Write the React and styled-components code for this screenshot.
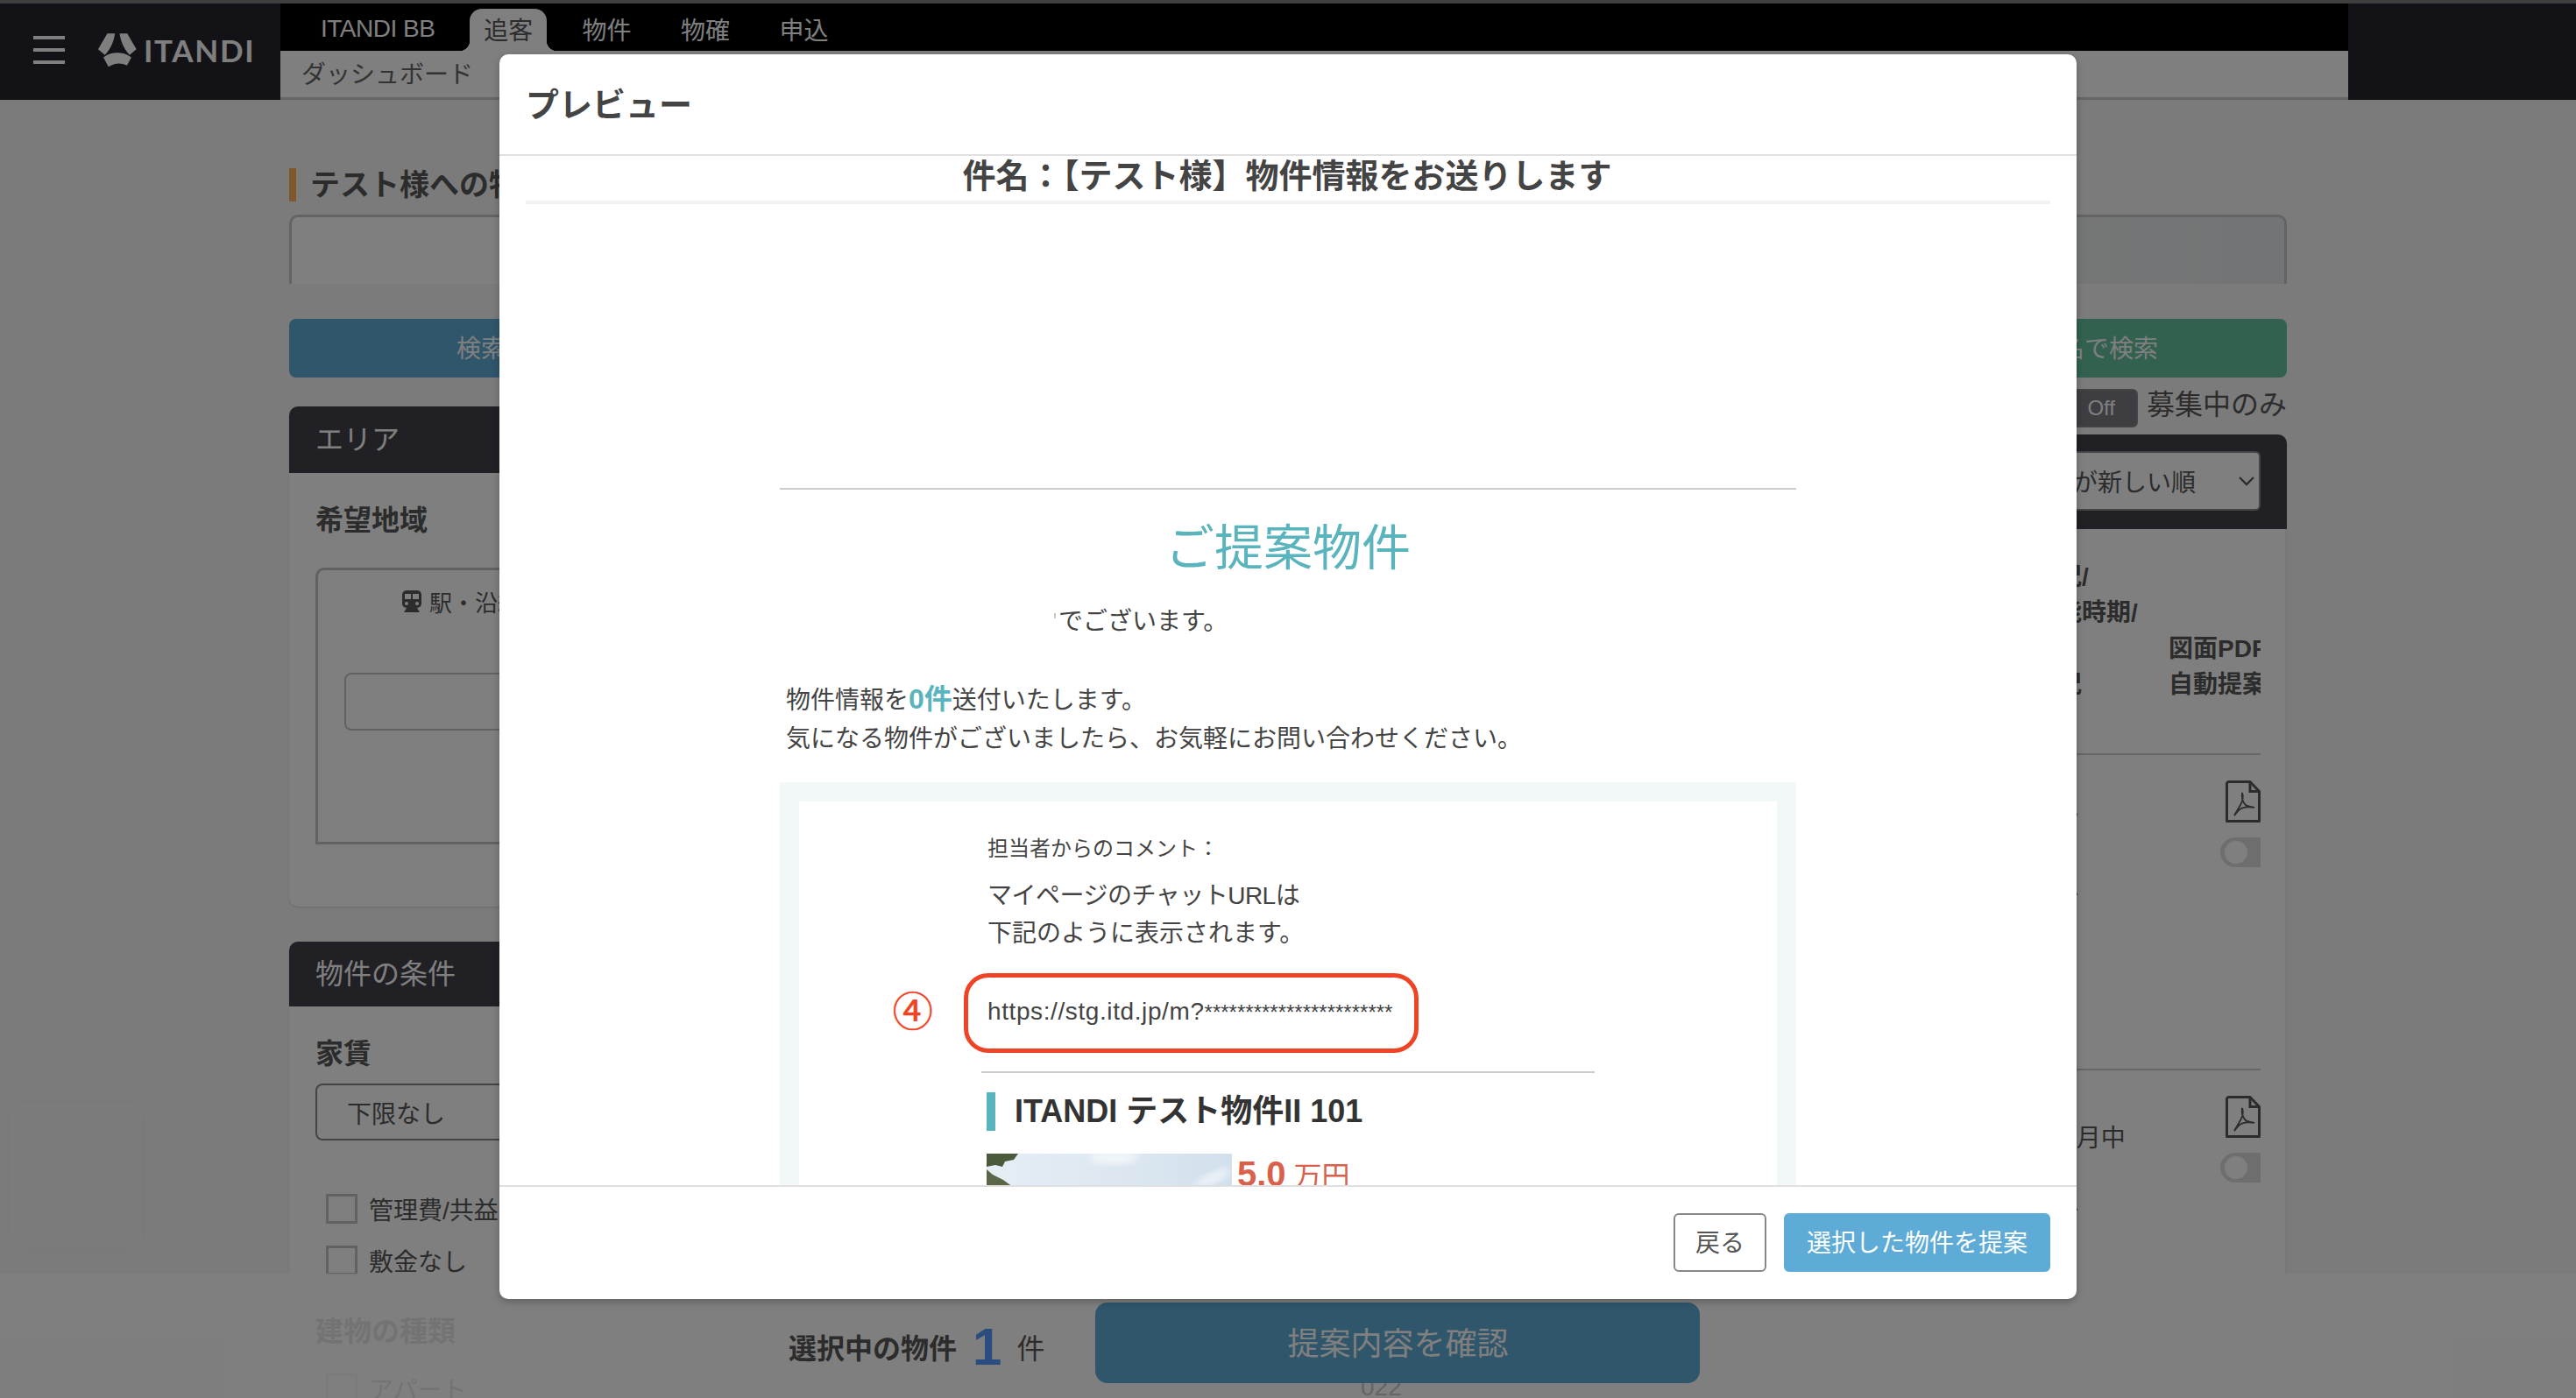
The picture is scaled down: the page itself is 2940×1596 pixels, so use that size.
import React from "react";
import styled, { createGlobalStyle } from "styled-components";

const GlobalStyle = createGlobalStyle`
  html, body { margin: 0; padding: 0; }
  body { font-family: "Liberation Sans", "Noto Sans CJK JP", sans-serif; color: #595959; }
  * { box-sizing: border-box; }
`;

const Screen = styled.div`
  position: relative; width: 2940px; height: 1596px; overflow: hidden; background: #f6f6f8;
`;
const TopStrip = styled.div` height: 4px; background: #7e7e7e; `;

/* header */
const Header = styled.header` display: flex; height: 110px; `;
const Brand = styled.div`
  width: 320px; background: #26262f; display: flex; align-items: center; padding: 0 0 4px 38px;
`;
const Burger = styled.div`
  width: 36px; height: 32px; display: flex; flex-direction: column; justify-content: space-between;
  margin-right: 38px;
  span { display: block; height: 4px; background: #fff; }
`;
const LogoText = styled.span`
  font-family: Lato, "Liberation Sans", sans-serif; font-weight: 700; font-size: 35px; line-height: 1;
  color: #fff; letter-spacing: 1.7px; margin-left: 8px;
`;
const NavColumn = styled.div` width: 2360px; display: flex; flex-direction: column; background: #fff; `;
const NavBlack = styled.nav` height: 54px; background: #000; display: flex; padding: 6px 0 0 18px; `;
const Tab = styled.div`
  position: relative; height: 48px; display: flex; align-items: center; justify-content: center;
  min-width: 112.5px; padding: 0 28px 3px; font-size: 28px; border-radius: 14px 14px 0 0; letter-spacing: ${p => (p.$latin ? "-0.5px" : "0")};
  color: ${p => (p.$active ? "#595959" : "#fff")};
  background: ${p => (p.$active ? "#fff" : "transparent")};
  ${p => p.$active && `
    width: 88px; min-width: 88px; padding: 0 0 3px; margin: 0 12px;
    &::before, &::after { content: ""; position: absolute; bottom: 0; width: 12px; height: 12px; }
    &::before { left: -12px; background: radial-gradient(circle at 0 0, #000 12px, #fff 12.5px); }
    &::after { right: -12px; background: radial-gradient(circle at 100% 0, #000 12px, #fff 12.5px); }
  `}
`;
const SubNav = styled.div`
  flex: 1; display: flex; align-items: center; padding: 0 0 4px 24px; font-size: 28px; color: #666;
  border-bottom: 3px solid #ccc;
`;
const BrandRight = styled.div` flex: 1; background: #26262f; `;

/* page */
const Page = styled.main` width: 2610px; padding: 78px 0 0 330px; `;
const SectionTitle = styled.h1`
  margin: 0; height: 38px; border-left: 8px solid #ffb05a; padding-left: 16px;
  font-size: 34px; line-height: 38px; font-weight: 700; color: #595959; white-space: nowrap;
`;
const SearchBox = styled.div`
  margin-top: 15px; height: 79px; border: 3px solid #c8c8c8; border-bottom: 0; border-radius: 10px 10px 0 0;
  background: linear-gradient(90deg, #fff 0%, #fff 40%, #e6e8ea 100%);
`;
const ButtonRow = styled.div` margin-top: 40px; display: flex; gap: 20px; `;
const SearchButton = styled.div`
  flex: 1; height: 67px; border-radius: 8px; display: flex; align-items: center; font-size: 28px; color: #fff;
  background: ${p => p.$bg};
  justify-content: ${p => (p.$end ? "flex-end" : "flex-start")};
  padding: ${p => (p.$end ? "0 147px 3px 0" : "0 0 3px 191px")};
`;
const Columns = styled.div` margin-top: 13px; display: flex; gap: 60px; align-items: flex-start; `;
const LeftColumn = styled.div` width: 760px; padding-top: 20px; `;
const RightColumn = styled.div` flex: 1; min-width: 0; `;

const Panel = styled.section`
  background: #fff; border-radius: 10px; margin-bottom: 40px; box-shadow: 0 1px 2px rgba(0,0,0,.15);
`;
const PanelHead = styled.h2`
  margin: 0; height: ${p => p.$h}px; padding: 0 0 6px 30px; background: #424048; color: #fff;
  border-radius: 10px 10px 0 0; font-size: 32px; font-weight: 400; display: flex; align-items: center;
`;
const PanelBody = styled.div` padding: 34px 30px ${p => p.$pb || 0}px; `;
const FieldLabel = styled.h3`
  margin: 0; font-size: 32px; line-height: 40px; font-weight: 700; color: #595959;
  ${p => p.$mt && `margin-top: ${p.$mt}px;`}
`;
const AreaBox = styled.div`
  margin-top: 34px; height: 316px; border: 3px solid #c4c4c4; border-radius: 10px 0 0 0; padding: 18px 30px 0;
`;
const AreaTab = styled.div`
  display: flex; align-items: center; gap: 9px; padding-left: 66px; height: 34px;
  font-size: 26px; color: #595959; white-space: nowrap;
`;
const AreaInput = styled.div`
  margin-top: 65px; height: 66px; border: 2px solid #c4c4c4; border-radius: 8px; background: #fff;
`;
const RentSelect = styled.div`
  margin-top: 14px; height: 65px; border: 2px solid #888; border-radius: 8px; padding-left: 34px;
  display: flex; align-items: center; font-size: 28px; color: #595959;
`;
const CheckRow = styled.div`
  display: flex; align-items: center; margin: ${p => p.$mt}px 0 0 12px; height: 34px;
  font-size: 28px; color: #595959; white-space: nowrap;
`;
const CheckBox = styled.span`
  width: 36px; height: 34px; border: 3px solid #c4c4c4; margin-right: 13px; background: #fff;
`;

const AvailRow = styled.div` display: flex; justify-content: flex-end; align-items: center; height: 44px; margin-bottom: 8px; `;
const OffToggle = styled.div`
  width: 150px; height: 44px; border-radius: 6px; background: #7c7a82; border: 2px solid #888;
  display: flex; align-items: center; justify-content: flex-end; padding-right: 24px;
  font-size: 24px; color: #fff; margin-right: 10px;
`;
const AvailText = styled.span` font-size: 32px; line-height: 44px; padding-bottom: 8px; color: #595959; `;
const ListPanel = styled.section`
  background: #fff; border-right: 2px solid #eee; height: 1100px; border-radius: 10px 10px 0 0;
`;
const ListHead = styled.div`
  height: 108px; background: #424048; border-radius: 10px 10px 0 0; display: flex; justify-content: flex-end;
  align-items: center; padding: 0 30px 2px 0;
  margin-right: -2px;
`;
const SortSelect = styled.div`
  height: 68px; width: 700px; background: #fff; border: 2px solid #8a8a90; border-radius: 6px;
  display: flex; align-items: center; justify-content: flex-end; gap: 48px; padding-right: 4px;
  font-size: 28px; color: #595959;
`;
const ListBody = styled.div` padding: 0 28px 0 0; `;
const ListGrid = styled.div`
  display: flex; justify-content: flex-end; height: ${p => p.$h}px; padding-top: ${p => p.$pt}px;
  border-bottom: ${p => (p.$line ? "2px solid #ccc" : "0")};
`;
const ColA = styled.div` width: 211px; white-space: nowrap; `;
const ColB = styled.div` width: 105px; overflow: hidden; white-space: nowrap; display: flex; flex-direction: column; `;
const HeadLine = styled.div`
  font-size: 28px; line-height: 41px; font-weight: 700; color: #595959; height: 41px;
`;
const CellLine = styled.div` font-size: 28px; color: #595959; line-height: ${p => p.$h}px; height: ${p => p.$h}px; `;
const PdfWrap = styled.div` display: flex; justify-content: flex-end; padding-top: 7px; height: 55px; svg { display: block; } `;
const ToggleClip = styled.div` margin: 17px 0 0 59px; width: 46px; height: 34px; overflow: hidden; `;
const ToggleTrack = styled.div`
  width: 66px; height: 34px; border-radius: 17px; background: #dcdcdc; display: flex; align-items: center; padding-left: 5px;
  &::before { content: ""; width: 26px; height: 26px; border-radius: 50%; background: #fff; }
`;

const ChatGhost = styled.div`
  position: absolute; left: 12px; top: 1260px; width: 150px; height: 165px; border-radius: 12px;
  background: #f7f7f9; box-shadow: 0 0 14px rgba(0,0,0,.015);
`;

/* bottom bar */
const BottomBar = styled.footer`
  position: absolute; left: 0; right: 0; bottom: 0; height: 142px; background: rgba(255,255,255,.85);
  display: flex; align-items: flex-start; padding: 33px 0 0 900px;
`;
const BarLabel = styled.span` font-size: 32px; font-weight: 700; color: #595959; line-height: 44px; margin-top: 31px; `;
const BarCount = styled.span`
  font-family: "Liberation Sans", sans-serif; font-size: 60px; font-weight: 700; color: #5698ff;
  line-height: 60px; margin: 21px 17px 0 18px;
`;
const BarUnit = styled.span` font-size: 32px; color: #595959; line-height: 44px; margin-top: 31px; `;
const ConfirmButton = styled.div`
  position: relative; margin: 0 0 0 58px; width: 690px; height: 92px; border-radius: 14px; background: #60acd6; color: #fff;
  font-size: 36px; padding-bottom: 5px; display: flex; align-items: center; justify-content: center;
`;
const GhostNumber = styled.span`
  position: absolute; left: 1553px; top: 113px; font-size: 28px; line-height: 34px; color: #c8c8c8;
`;

/* overlay + modal */
const Backdrop = styled.div` position: absolute; inset: 0; background: rgba(0,0,0,.5); `;
const Modal = styled.div`
  position: absolute; left: 570px; top: 62px; width: 1800px; height: 1421px; background: #fff; border-radius: 10px;
  display: flex; flex-direction: column; box-shadow: 0 3px 8px rgba(0,0,0,.25);
`;
const ModalHeader = styled.div`
  height: 116px; border-bottom: 2px solid #e0e0e0; padding: 0 0 6px 30px; display: flex; align-items: center;
  font-size: 38px; font-weight: 700; color: #444;
`;
const ModalBody = styled.div` flex: 1; min-height: 0; overflow: hidden; padding: 0 30px; `;
const ModalFooter = styled.div`
  height: 130px; flex: none; border-top: 2px solid #e0e0e0; display: flex; justify-content: flex-end; gap: 20px; padding: 30px 30px 0 0;
`;
const BackButton = styled.div`
  width: 106px; height: 67px; border: 2px solid #888; border-radius: 6px; display: flex; align-items: center;
  justify-content: center; font-size: 28px; padding-bottom: 3px; color: #555;
`;
const ProposeButton = styled.div`
  width: 304px; height: 67px; border-radius: 6px; background: #5dabd6; color: #fff; display: flex; align-items: center;
  justify-content: center; font-size: 28px; padding-bottom: 3px;
`;
const Subject = styled.div`
  height: 55px; border-bottom: 4px solid #f2f2f2; text-align: center; font-size: 38px; line-height: 46px;
  font-weight: 700; color: #444; padding-right: 2px; white-space: nowrap;
`;
const Email = styled.div` width: 1160px; margin: 324px auto 0; border-top: 2px solid #ccc; `;
const EmailTitle = styled.h2`
  margin: 29px 0 0; text-align: center; font-size: 56px; line-height: 76px; font-weight: 400; color: #5ab4bd;
`;
const Greeting = styled.p`
  margin: 24px 0 0; padding-left: 313px; font-size: 28px; line-height: 44px; color: #444; display: flex; align-items: flex-start;
`;
const Tick = styled.span` width: 2px; height: 6px; background: #c8c8c8; margin: 12px 3px 0 0; `;
const Intro = styled.p` margin: 46px 0 0; padding-left: 7px; font-size: 28px; line-height: 44px; color: #444; `;
const Count = styled.b` font-size: 32px; line-height: 1; font-weight: 700; color: #5ab4bd; `;
const Mint = styled.div` margin-top: 27px; background: #f2f8f8; padding: 22px 22px 0; height: 600px; `;
const Card = styled.div` background: #fff; height: 578px; padding: 36px 0 0 215px; `;
const CommentLabel = styled.div` font-size: 24px; line-height: 36px; color: #444; `;
const Comment = styled.div` margin-top: 14px; font-size: 28px; line-height: 43px; color: #444; `;
const TightLine = styled.span` letter-spacing: -0.5px; `;
const UrlRow = styled.div`
  position: relative; margin-top: 46px; font-size: 28px; line-height: 44px; color: #444; white-space: nowrap; letter-spacing: 0.6px;
`;
const Stars = styled.span` font-size: 24px; line-height: 1; letter-spacing: 0; `;
const RedBox = styled.div`
  position: absolute; left: -27px; top: -22px; width: 519px; height: 91px; border: 5px solid #ee4425; border-radius: 28px;
`;
const RedMark = styled.span`
  position: absolute; left: -113px; top: -6px; width: 56px; text-align: center; font-size: 46px; line-height: 56px; color: #ee4425;
  -webkit-text-stroke: 0.6px #ee4425;
`;
const Divider = styled.div` margin: 46px 0 0 -7px; width: 700px; height: 2px; background: #ccc; `;
const PropertyTitle = styled.h3`
  margin: 22px 0 0 -1px; height: 44px; border-left: 10px solid #5ab4bd; padding-left: 22px;
  font-size: 36px; line-height: 44px; font-weight: 700; color: #333; white-space: nowrap;
`;
const PropertyRow = styled.div` margin: 26px 0 0 -1px; display: flex; gap: 6px; align-items: flex-start; `;
const Price = styled.div` color: #d9604a; font-size: 32px; line-height: 46px; white-space: nowrap; `;
const PriceValue = styled.b` font-size: 40px; font-weight: 700; margin-right: 9px; `;

const PdfIcon = () => (
  <svg width="40" height="48" viewBox="0 0 40 48" fill="none">
    <path d="M3 1.5h25l10.5 11V46.5H1.5V3z" stroke="#595959" strokeWidth="3" strokeLinejoin="round" />
    <path d="M28 1.5v11h10.5" stroke="#595959" strokeWidth="3" />
    <path d="M19 14c-1 7 2 12 4 14s8 2 10 3c-4-1-11-1-15 1s-7 7-8 8c1-2 6-10 8-14s2-9 1-12z" stroke="#595959" strokeWidth="1.8" fill="none" />
  </svg>
);
const TrainIcon = () => (
  <svg width="22" height="25" viewBox="0 0 22 25">
    <path d="M5 0h12a5 5 0 0 1 5 5v10a5 5 0 0 1-5 5H5a5 5 0 0 1-5-5V5a5 5 0 0 1 5-5z" fill="#595959" />
    <rect x="3" y="4" width="7" height="6" fill="#fff" /><rect x="12" y="4" width="7" height="6" fill="#fff" />
    <circle cx="5" cy="15" r="2" fill="#fff" /><circle cx="17" cy="15" r="2" fill="#fff" />
    <path d="M5 20h12l3 5H2z" fill="#595959" />
  </svg>
);
const Chevron = () => (
  <svg width="20" height="12" viewBox="0 0 20 12" fill="none"><path d="M2 2l8 8 8-8" stroke="#595959" strokeWidth="2.4" /></svg>
);
const LogoMark = () => (
  <svg width="44" height="39" viewBox="37 26 131 116" fill="#fff">
    <path d="M68 27h26c-3 22-13 52-34 73L37 80z" />
    <path d="M136 27h-26c3 22 13 52 34 73l23-20z" />
    <path d="M55 108c15-13 33-16 47-16s33 3 48 16l-15 27c-22-10-42-9-63 5z" />
  </svg>
);
const SkyPhoto = () => (
  <svg width="280" height="200" viewBox="0 0 280 200">
    <defs>
      <linearGradient id="sky" x1="0" y1="0" x2="1" y2="0">
        <stop offset="0" stopColor="#e6eef5" /><stop offset=".6" stopColor="#dbe6f0" /><stop offset="1" stopColor="#d2e0ed" />
      </linearGradient>
      <filter id="soft"><feGaussianBlur stdDeviation="4" /></filter>
    </defs>
    <rect width="280" height="200" fill="url(#sky)" />
    <ellipse cx="145" cy="4" rx="28" ry="8" fill="#f3f6f9" filter="url(#soft)" />
    <ellipse cx="258" cy="28" rx="22" ry="6" fill="#eef3f8" filter="url(#soft)" transform="rotate(-25 258 28)" />
    <path d="M0 0h36l-5 7-10 2-3 6-8-2-10 2z" fill="#4c5a3c" />
    <path d="M0 18l7 6 12 6 11 8H0z" fill="#5b6647" />
  </svg>
);

export default function App() {
  return (
    <Screen>
      <GlobalStyle />
      <TopStrip />
      <Header>
        <Brand>
          <Burger><span /><span /><span /></Burger>
          <LogoMark />
          <LogoText>ITANDI</LogoText>
        </Brand>
        <NavColumn>
          <NavBlack>
            <Tab $latin>ITANDI BB</Tab>
            <Tab $active>追客</Tab>
            <Tab>物件</Tab>
            <Tab>物確</Tab>
            <Tab>申込</Tab>
          </NavBlack>
          <SubNav>ダッシュボード</SubNav>
        </NavColumn>
        <BrandRight />
      </Header>

      <Page>
        <SectionTitle>テスト様への物件提案</SectionTitle>
        <SearchBox />
        <ButtonRow>
          <SearchButton $bg="#60acd6">検索条件で検索</SearchButton>
          <SearchButton $bg="#66c2a0" $end>物件名で検索</SearchButton>
        </ButtonRow>
        <Columns>
          <LeftColumn>
            <Panel>
              <PanelHead $h={76}>エリア</PanelHead>
              <PanelBody $pb={71}>
                <FieldLabel>希望地域</FieldLabel>
                <AreaBox>
                  <AreaTab><TrainIcon />駅・沿線</AreaTab>
                  <AreaInput />
                </AreaBox>
              </PanelBody>
            </Panel>
            <Panel>
              <PanelHead $h={74}>物件の条件</PanelHead>
              <PanelBody>
                <FieldLabel>家賃</FieldLabel>
                <RentSelect>下限なし</RentSelect>
                <CheckRow $mt={61}><CheckBox />管理費/共益費込み</CheckRow>
                <CheckRow $mt={25}><CheckBox />敷金なし</CheckRow>
                <FieldLabel $mt={44}>建物の種類</FieldLabel>
                <CheckRow $mt={28}><CheckBox />アパート</CheckRow>
              </PanelBody>
            </Panel>
          </LeftColumn>
          <RightColumn>
            <AvailRow>
              <OffToggle>Off</OffToggle>
              <AvailText>募集中のみ</AvailText>
            </AvailRow>
            <ListPanel>
              <ListHead>
                <SortSelect>物件情報の更新日が新しい順<Chevron /></SortSelect>
              </ListHead>
              <ListBody>
                <ListGrid $h={258} $pt={34} $line>
                  <ColA>
                    <HeadLine>募集状況/</HeadLine>
                    <HeadLine>入居可能時期/</HeadLine>
                    <HeadLine />
                    <HeadLine>申込状況</HeadLine>
                  </ColA>
                  <ColB>
                    <HeadLine />
                    <HeadLine />
                    <HeadLine>図面PDF</HeadLine>
                    <HeadLine>自動提案</HeadLine>
                  </ColB>
                </ListGrid>
                <ListGrid $h={360} $pt={22} $line>
                  <ColA>
                    <CellLine $h={92}>アパート</CellLine>
                    <CellLine $h={90}>アパート</CellLine>
                  </ColA>
                  <ColB>
                    <PdfWrap><PdfIcon /></PdfWrap>
                    <ToggleClip><ToggleTrack /></ToggleClip>
                  </ColB>
                </ListGrid>
                <ListGrid $h={300} $pt={22}>
                  <ColA>
                    <CellLine $h={112}>2024年5月中</CellLine>
                    <CellLine $h={50}>アパート</CellLine>
                  </ColA>
                  <ColB>
                    <PdfWrap><PdfIcon /></PdfWrap>
                    <ToggleClip><ToggleTrack /></ToggleClip>
                  </ColB>
                </ListGrid>
              </ListBody>
            </ListPanel>
          </RightColumn>
        </Columns>
      </Page>

      <ChatGhost />

      <BottomBar>
        <BarLabel>選択中の物件</BarLabel>
        <BarCount>1</BarCount>
        <BarUnit>件</BarUnit>
        <GhostNumber>022</GhostNumber>
        <ConfirmButton>提案内容を確認</ConfirmButton>
      </BottomBar>

      <Backdrop />
      <Modal>
        <ModalHeader>プレビュー</ModalHeader>
        <ModalBody>
          <Subject>件名：【テスト様】物件情報をお送りします</Subject>
          <Email>
            <EmailTitle>ご提案物件</EmailTitle>
            <Greeting><Tick />でございます。</Greeting>
            <Intro>
              物件情報を<Count>0件</Count>送付いたします。<br />
              気になる物件がございましたら、お気軽にお問い合わせください。
            </Intro>
            <Mint>
              <Card>
                <CommentLabel>担当者からのコメント：</CommentLabel>
                <Comment><TightLine>マイページのチャットURLは</TightLine><br />下記のように表示されます。</Comment>
                <UrlRow>
                  https://stg.itd.jp/m?<Stars>***********************</Stars>
                  <RedBox />
                  <RedMark>④</RedMark>
                </UrlRow>
                <Divider />
                <PropertyTitle>ITANDI テスト物件II 101</PropertyTitle>
                <PropertyRow>
                  <SkyPhoto />
                  <Price><PriceValue>5.0</PriceValue>万円</Price>
                </PropertyRow>
              </Card>
            </Mint>
          </Email>
        </ModalBody>
        <ModalFooter>
          <BackButton>戻る</BackButton>
          <ProposeButton>選択した物件を提案</ProposeButton>
        </ModalFooter>
      </Modal>
    </Screen>
  );
}
